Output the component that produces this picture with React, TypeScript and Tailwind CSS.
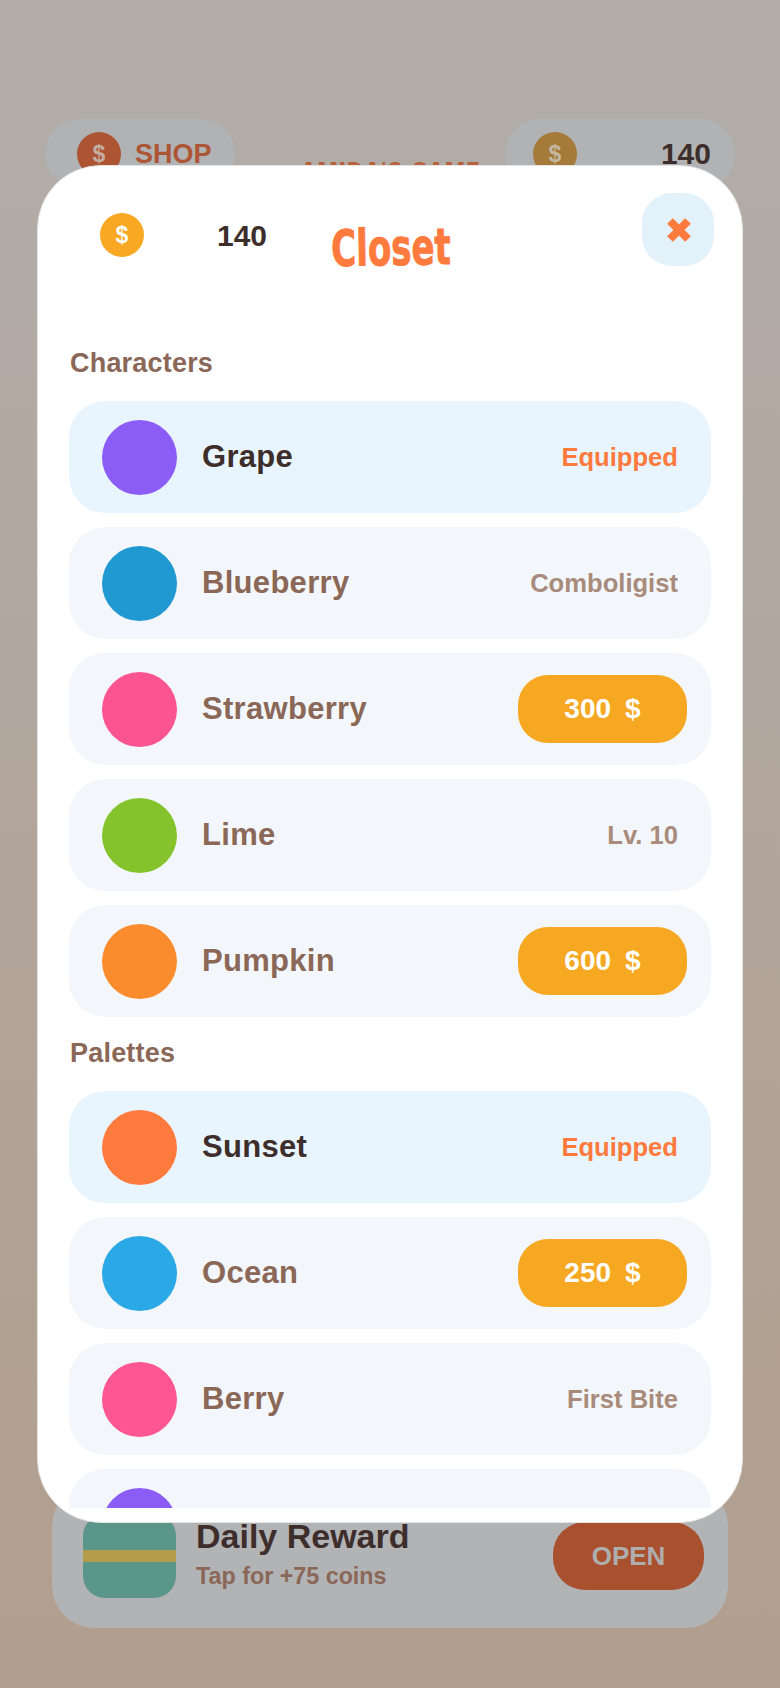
const sans = "font-['Liberation_Sans',Arial,sans-serif]";

type Item = { name: string; color: string; equipped?: boolean; price?: number; note?: string };

const characters: Item[] = [
  { name: "Grape", color: "bg-[#8b5cf6]", equipped: true },
  { name: "Blueberry", color: "bg-[#2098d1]", note: "Comboligist" },
  { name: "Strawberry", color: "bg-[#fb5490]", price: 300 },
  { name: "Lime", color: "bg-[#84c32c]", note: "Lv. 10" },
  { name: "Pumpkin", color: "bg-[#fb8c2d]", price: 600 },
];

// last row is cut off by the modal, only its swatch shows
const palettes: Item[] = [
  { name: "Sunset", color: "bg-[#ff7a3d]", equipped: true },
  { name: "Ocean", color: "bg-[#2ba8e6]", price: 250 },
  { name: "Berry", color: "bg-[#fd5690]", note: "First Bite" },
  { name: "", color: "bg-[#8b5cf6]" },
];

function Coin({ className }: { className: string }) {
  return (
    <div className={`flex h-[44px] w-[44px] shrink-0 items-center justify-center rounded-full text-[23px] font-bold ${className}`}>
      $
    </div>
  );
}

function Row({ item }: { item: Item }) {
  return (
    <div className={`flex h-[112px] shrink-0 items-center rounded-[36px] pl-[33px] ${item.price ? "pr-[24px]" : "pr-[33px]"} ${item.equipped ? "bg-[#e8f5ff]" : "bg-[#f3f7fb]"}`}>
      <div className={`h-[75px] w-[75px] shrink-0 rounded-full ${item.color}`} />
      <div className={`ml-[25px] flex-1 text-[31px] font-bold tracking-[0.3px] ${item.equipped ? "text-[#3e2e2b]" : "text-[#8a6757]"}`}>
        {item.name}
      </div>
      {item.equipped && <div className="text-[25.6px] font-bold text-[#ff7a3d]">Equipped</div>}
      {item.note && <div className="text-[25.6px] font-bold text-[#a98b7c]">{item.note}</div>}
      {item.price && (
        <div className="flex h-[68px] w-[169px] items-center justify-center gap-[14px] rounded-[30px] bg-[#f7a823] text-[28px] font-bold text-white">
          <span>{item.price}</span>
          <span>$</span>
        </div>
      )}
    </div>
  );
}

function Section({ title, items }: { title: string; items: Item[] }) {
  return (
    <section className="flex flex-col">
      <h2 className="mb-[22px] h-[32px] pl-px text-[27px] leading-[32px] font-bold tracking-[0.2px] text-[#8a6757]">{title}</h2>
      <div className="flex flex-col gap-[14px]">
        {items.map((item) => (
          <Row key={item.name} item={item} />
        ))}
      </div>
    </section>
  );
}

export default function App() {
  return (
    <div className={`relative flex h-[1688px] w-[780px] flex-col overflow-hidden bg-gradient-to-b from-[#b2ada9] to-[#b19e8e] ${sans}`}>
      {/* dimmed game screen behind the modal */}
      <div className="flex justify-between pt-[119px] pr-[45px] pl-[45px]">
        <div className="flex h-[70px] w-[190px] shrink-0 items-center rounded-[34px] bg-[#b0b2b4] pl-[32px]">
          <Coin className="bg-[#ad5433] text-[#c4ada2]" />
          <span className="ml-[14px] text-[27px] font-bold text-[#ad5636]">SHOP</span>
        </div>
        <div className="mt-[35px] ml-[40px] flex w-[181px] shrink-0 justify-center">
          <span className="shrink-0 scale-x-[0.67] font-['DejaVu_Sans',sans-serif] text-[32px] leading-[40px] font-bold whitespace-nowrap text-[#b8613f]">
            AMIDA'S GAME
          </span>
        </div>
        <div className="flex h-[70px] w-[230px] shrink-0 items-center justify-between rounded-[34px] bg-[#b0b2b4] pr-[24px] pl-[28px]">
          <Coin className="bg-[#a67a38] text-[#c4b7a0]" />
          <span className="-translate-y-px text-[30px] font-bold text-[#3e2e2b]">140</span>
        </div>
      </div>

      <div className="mx-[52px] mt-auto mb-[60px] flex h-[144px] items-center rounded-[42px] bg-[#b2b3b5] pr-[24px] pl-[31px]">
        <div className="flex h-[84px] w-[93px] items-center rounded-[22px] bg-[#5a978a]">
          <div className="h-[12px] w-full bg-[#b59c4a]" />
        </div>
        <div className="ml-[20px] flex-1 -translate-y-[3px]">
          <div className="text-[34px] leading-[40px] font-bold text-[#3e2e2b]">Daily Reward</div>
          <div className="mt-[6px] text-[23.3px] leading-[28px] font-bold text-[#8a6757]">Tap for +75 coins</div>
        </div>
        <div className="flex h-[68px] w-[151px] items-center justify-center rounded-[32px] bg-[#a9502f] text-[26px] font-bold text-[#aeaeae]">
          OPEN
        </div>
      </div>

      {/* closet modal */}
      <div className="absolute top-[165px] left-[37px] flex h-[1358px] w-[706px] flex-col rounded-[64px] border border-[#e4e4e4] bg-white px-[31px] pb-[14px]">
        <div className="relative h-[181px] shrink-0">
          <Coin className="absolute top-[47px] left-[31px] bg-[#f8a823] text-white" />
          <span className="absolute top-[52px] left-[148px] text-[30px] leading-[36px] font-bold text-[#3e2e2b]">140</span>
          <div className="absolute top-[50px] left-[232px] w-[180px] origin-center -rotate-1 scale-x-[0.68] text-center font-['DejaVu_Sans',sans-serif] text-[50px] leading-[64px] font-bold text-[#ff7a3d] [-webkit-text-stroke:1px_#ff7a3d]">
            Closet
          </div>
          <div className="absolute top-[27px] left-[573px] flex h-[73px] w-[72px] items-center justify-center rounded-[30px] bg-[#e3f1fb]">
            <svg className="ml-px" width="26" height="26" viewBox="0 0 26 26" fill="none" stroke="#ff7a3d" strokeWidth="8">
              <path d="M4 4 L22 22 M22 4 L4 22" />
            </svg>
          </div>
        </div>
        <div className="flex min-h-0 flex-1 flex-col gap-[20px] overflow-hidden">
          <Section title="Characters" items={characters} />
          <Section title="Palettes" items={palettes} />
        </div>
      </div>
    </div>
  );
}
